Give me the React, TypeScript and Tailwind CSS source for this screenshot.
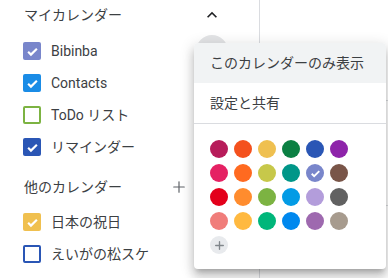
import { Plus } from "lucide-react";

type Cal = { name: string; color: string; checked: boolean; hover?: boolean };

const myCalendars: Cal[] = [
  { name: "Bibinba", color: "#7986cb", checked: true, hover: true },
  { name: "Contacts", color: "#1a8ce6", checked: true },
  { name: "ToDo リスト", color: "#7cb342", checked: false },
  { name: "リマインダー", color: "#2a56b5", checked: true },
];

const otherCalendars: Cal[] = [
  { name: "日本の祝日", color: "#f0c04f", checked: true },
  { name: "えいがの松スケ", color: "#2a56b5", checked: false },
];

const palette = [
  "#b71c5a", "#f4511e", "#efc050", "#0b8043", "#2a56b5", "#8e24aa",
  "#e52163", "#ff6a20", "#c7c84a", "#009688", "#7986cb", "#795548",
  "#e3001b", "#ff8c2e", "#7cb342", "#039be5", "#b39ddb", "#616161",
  "#f07d7a", "#ffb940", "#00b67a", "#0088ee", "#9e69af", "#a79b8e",
];

function Check({ className = "" }: { className?: string }) {
  return (
    <svg viewBox="0 0 24 24" className={className} fill="none" stroke="white" strokeWidth={3.4}>
      <path d="M5 12.5l4.5 4.5L19 7.5" />
    </svg>
  );
}

function Box({ cal }: { cal: Cal }) {
  return cal.checked ? (
    <span
      className="w-[18px] h-[18px] rounded-[2px] flex items-center justify-center"
      style={{ backgroundColor: cal.color }}
    >
      <Check className="w-[15px] h-[15px]" />
    </span>
  ) : (
    <span className="w-[18px] h-[18px] rounded-[2px] border-2" style={{ borderColor: cal.color }} />
  );
}

function Row({ cal }: { cal: Cal }) {
  return (
    <div className="h-8 w-[228px] flex items-center pl-[23px]">
      <Box cal={cal} />
      <span className="ml-[10px] flex-1 text-[14px] text-[#3c4043]">{cal.name}</span>
      {cal.hover && <span className="w-8 h-8 rounded-full bg-[#e3e4e6]" />}
    </div>
  );
}

export default function App() {
  return (
    <div className="relative w-[388px] h-[278px] bg-white overflow-hidden font-['Roboto','Noto_Sans_CJK_JP',sans-serif]">
      <div className="flex h-full">
        <div className="w-[259px] shrink-0">
          <div className="h-[30px] w-[228px] flex items-center pl-6">
            <span className="flex-1 text-[14px] text-[#3c4043]">マイカレンダー</span>
            <span className="w-8 flex justify-center">
              <svg viewBox="0 0 24 24" className="w-5 h-5 mt-[-1px]" fill="#202124">
                <path d="M7.41 15.41L12 10.83l4.59 4.58L18 14l-6-6-6 6z" />
              </svg>
            </span>
          </div>
          <div className="mt-[5px]">
            {myCalendars.map((c) => (
              <Row key={c.name} cal={c} />
            ))}
          </div>
          <div className="mt-2 h-8 w-[195px] flex items-center pl-6">
            <span className="flex-1 text-[14px] text-[#3c4043]">他のカレンダー</span>
            <span className="w-8 flex justify-center">
              <Plus className="w-[18px] h-[18px] text-[#5f6368]" strokeWidth={1.6} />
            </span>
          </div>
          <div className="mt-[3px]">
            {otherCalendars.map((c) => (
              <Row key={c.name} cal={c} />
            ))}
          </div>
        </div>
        <div className="flex-1 border-l border-[#dadce0] flex flex-col">
          <div className="h-[101px] border-b border-[#dadce0]" />
          <div className="h-[105px] border-b border-[#dadce0]" />
        </div>
      </div>

      <div className="absolute left-[194px] top-[43px] w-[192px] bg-white rounded-[4px] shadow-[0_8px_10px_1px_rgba(0,0,0,0.14),0_3px_14px_2px_rgba(0,0,0,0.12),0_5px_5px_-3px_rgba(0,0,0,0.2)] text-[14px] text-[#3c4043]">
        <div className="h-10 flex items-center pl-4 bg-[#f1f3f4] rounded-t-[4px]">このカレンダーのみ表示</div>
        <div className="h-10 flex items-center pl-4">設定と共有</div>
        <div className="border-t border-[#dadce0] pt-4 pb-[15px] pl-4">
          <div className="grid grid-cols-[repeat(6,18px)] gap-[6px]">
            {palette.map((c, i) => (
              <span
                key={i}
                className="w-[18px] h-[18px] rounded-full flex items-center justify-center"
                style={{ backgroundColor: c }}
              >
                {i === 10 && <Check className="w-[13px] h-[13px]" />}
              </span>
            ))}
            <span className="w-[18px] h-[18px] rounded-full bg-[#e8eaed] flex items-center justify-center">
              <Plus className="w-[13px] h-[13px] text-[#80868b]" strokeWidth={2.5} />
            </span>
          </div>
        </div>
      </div>
    </div>
  );
}
